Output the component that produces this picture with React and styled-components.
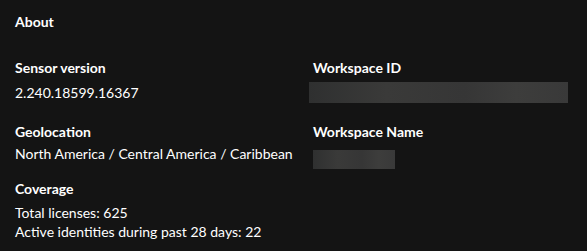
import React from "react";
import styled, { createGlobalStyle } from "styled-components";

const GlobalStyle = createGlobalStyle`
  body {
    margin: 0;
    background: #141414;
    font-family: "Lato", "Open Sans", sans-serif;
    color: #fff;
  }
`;

const Panel = styled.div`
  padding: 12px 15px;
  font-size: 14px;
  line-height: 20px;
`;

const Title = styled.h2`
  margin: 0 0 26px;
  font-size: 14px;
  font-weight: 700;
`;

const Grid = styled.div`
  display: grid;
  grid-template-columns: 298px 1fr;
`;

const Field = styled.div`
  display: flex;
  flex-direction: column;
  align-items: flex-start;
  margin-top: ${p => p.top || 0}px;
`;

const Label = styled.div`
  font-weight: 700;
`;

const Value = styled.div`
  margin-top: ${p => p.top || 0}px;
  line-height: ${p => p.lh || 20}px;
`;

const Redacted = styled.div`
  width: ${p => p.w}px;
  height: ${p => p.h}px;
  margin-top: ${p => p.top || 0}px;
  margin-left: ${p => p.left || 0}px;
  background: linear-gradient(90deg, #2f3030 0%, #3a3a39 30%, #363636 60%, #3d3d3c 80%, #393939 100%);
`;

export default function App() {
  return (
    <>
      <GlobalStyle />
      <Panel>
        <Title>About</Title>
        <Grid>
          <Field>
            <Label>Sensor version</Label>
            <Value top={5}>2.240.18599.16367</Value>
          </Field>
          <Field>
            <Label>Workspace ID</Label>
            <Redacted w={259} h={21} top={4} left={-4} />
          </Field>
          <Field top={19}>
            <Label>Geolocation</Label>
            <Value top={2}>North America / Central America / Caribbean</Value>
          </Field>
          <Field top={19}>
            <Label>Workspace Name</Label>
            <Redacted w={82} h={19} top={8} />
          </Field>
        </Grid>
        <Field top={10}>
          <Label>Coverage</Label>
          <Value top={5} lh={18.5}>
            Total licenses: 625
            <br />
            Active identities during past 28 days: 22
          </Value>
        </Field>
      </Panel>
    </>
  );
}
